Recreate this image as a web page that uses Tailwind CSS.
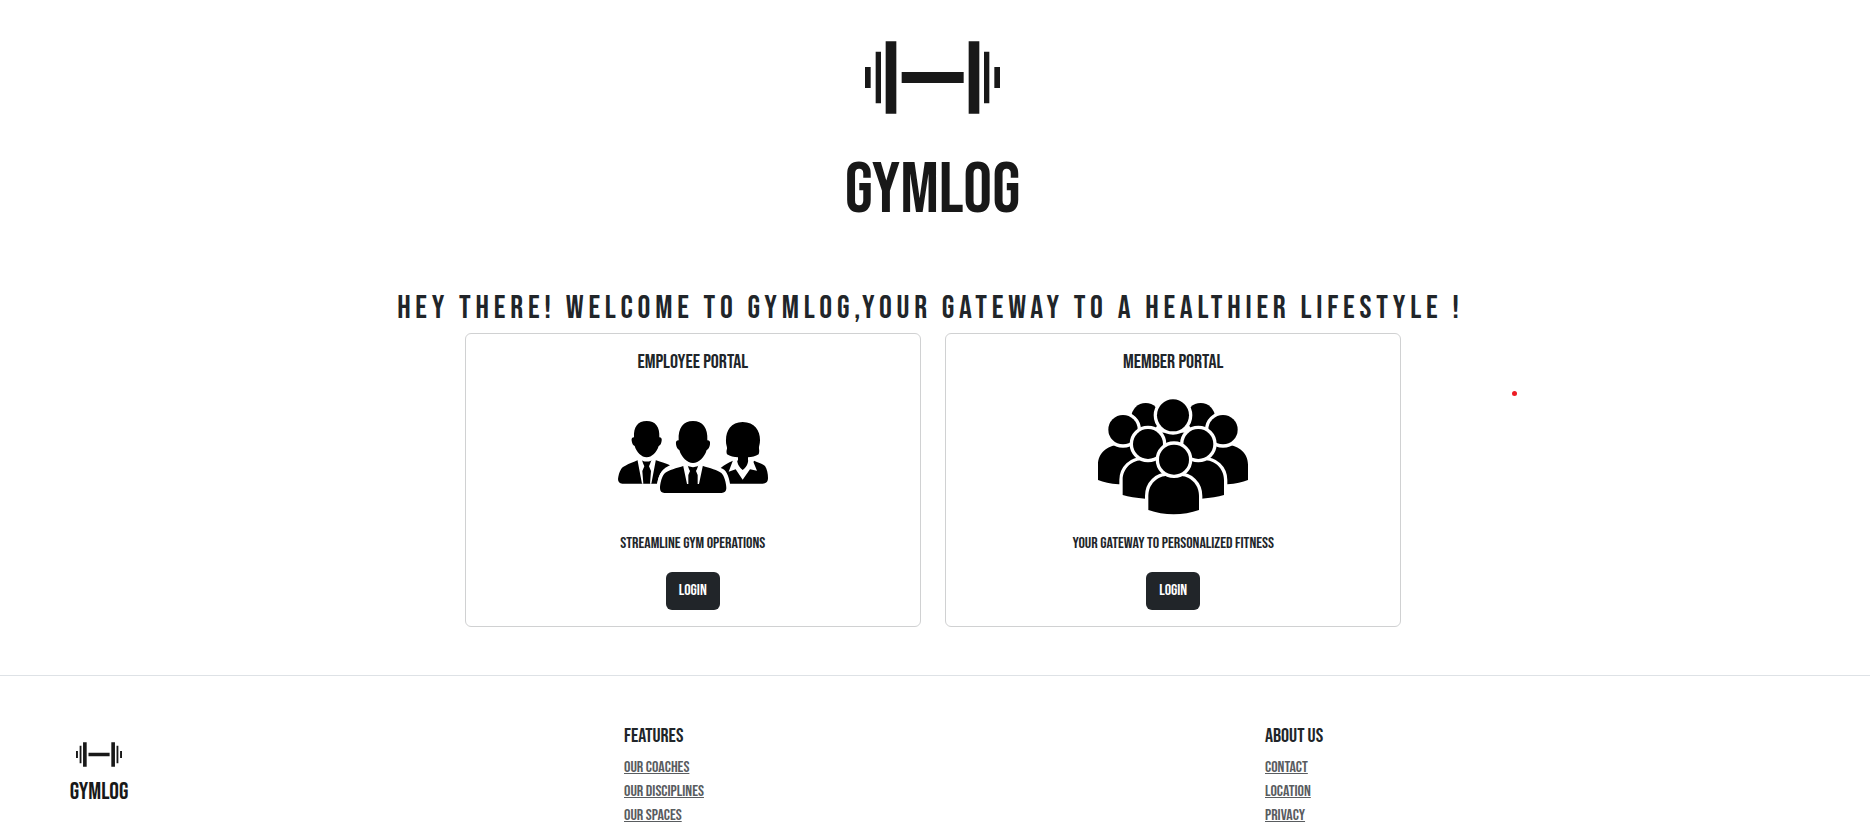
<!DOCTYPE html>
<html lang="en">
<head>
<meta charset="utf-8">
<meta name="viewport" content="width=device-width, initial-scale=1">
<title>GymLog</title>
<script src="https://cdn.jsdelivr.net/npm/@tailwindcss/browser@4"></script>
</head>
<body class="bg-white text-[#212529] font-['Bebas_Neue','Liberation_Sans_Narrow','Liberation_Sans',sans-serif] uppercase overflow-x-hidden">
<svg class="hidden">
  <symbol id="barbell" viewBox="105 63 405 219">
    <path fill="#181818" d="M105 141h17v63h-17zM137 95h16v155h-16zM167 64h32v217h-32zM215 156h186v33H215zM416 64h32v217h-32zM462 95h16v155h-16zM493 141h17v63h-17z"/>
  </symbol>
</svg>

<main class="relative flex flex-col items-center pt-[41px]">
  <svg class="w-[135px] h-[73px] mr-[5px]" aria-hidden="true"><use href="#barbell"/></svg>
  <div class="mt-[37px] mr-[5px] text-[72px] leading-[80px] text-[#181818]">GYMLOG</div>
  <h1 class="mt-[58px] mb-1 mr-[9px] text-[32px] leading-[40px] tracking-[0.15em] whitespace-nowrap">Hey there! Welcome to GymLog,your gateway to a healthier lifestyle !</h1>

  <div class="grid grid-cols-2 gap-6 w-[50.1%] min-w-[640px] mr-[4px]">
    <section class="flex flex-col items-center rounded-md border border-[#d0d1d2] p-4">
      <h2 class="text-[20px] leading-[24px]">Employee Portal</h2>
      <svg class="mt-2 size-[150px]" viewBox="51 -54 450 450" aria-hidden="true">
        <path d="M137 63c26 0 40 17 38 49 6 0 8 4 7 10-1 8-4 14-9 16-5 18-21 34-36 34s-31-16-36-34c-5-2-8-8-9-16-1-6 1-10 7-10-2-32 12-49 38-49z"/>
        <path d="M111 180l52 0c18 6 34 10 44 16-20 8-34 24-38 55H64c-9 0-13-6-13-14 3-22 10-36 22-40 12-7 25-11 38-17z"/>
        <path fill="#fff" d="M109 178l14 2c2 7 4 13 7 19l-6 14 3 38h-4zM165 178l-14 2c-2 7-4 13-7 19l6 14-3 38h4z"/>
        <path fill="#fff" d="M122 177h30l-2 5q-13 5-26 0z"/>
        <path d="M425 66c36 0 52 26 52 54 0 14-4 20-3 26 1 6 1 11-1 17-9 6-21 8-32 9v9l15 8 3-7c14 6 26 9 33 16 6 9 9 23 9 36 0 11-6 17-16 17h-98c-4-25-12-43-28-47 12-10 22-16 37-22l3 7 12-8v-9c-12-1-24-3-33-9-2-6-2-11 0-17 1-6-4-12-3-26 0-28 15-54 50-54z"/>
        <path fill="#fff" d="M396 181l12-6c0 18 8 28 17 35 10-7 17-17 17-35l13 6 13 31-21-4-22 31-21-31-21 7z"/>
        <path stroke="#fff" stroke-width="20" paint-order="stroke" d="M276 63c29 0 45 20 43 58 7 0 9 4 8 12-1 9-5 15-10 17-6 22-24 39-41 39s-35-17-41-39c-5-2-9-8-10-17-1-8 1-12 8-12-2-38 14-58 43-58zM249 197c-23 8-46 12-57 22-9 8-15 31-15 46 0 9 5 14 13 14h172c8 0 14-5 14-14 0-15-6-38-15-46-11-10-34-14-57-22z"/>
        <path fill="#fff" d="M246 195l14 0c2 8 4 13 7 18l-5 12 0 27h-4zM306 195l-14 0c-2 8-4 13-7 18l5 12 0 27h4z"/>
        <path fill="#fff" d="M258 190h36l-4 9q-14 5-28 0z"/>
      </svg>
      <p class="text-[16px] leading-[24px]">Streamline gym operations</p>
      <button type="button" class="mt-4 h-[38px] w-[54px] rounded-md bg-[#212529] text-[16px] leading-[24px] text-white">LOGIN</button>
    </section>

    <section class="flex flex-col items-center rounded-md border border-[#d0d1d2] p-4">
      <h2 class="text-[20px] leading-[24px]">Member Portal</h2>
      <svg class="mt-2 size-[150px]" viewBox="54 6 450 450" aria-hidden="true">
        <g stroke="#fff" stroke-width="20" paint-order="stroke">
          <circle cx="197" cy="112" r="43"/><circle cx="362" cy="112" r="43"/>
          <path d="M233 158h92v60h-92z"/>
          <circle cx="279" cy="106" r="48"/>
          <path d="M54 300v-46c0-34 28-58 60-58h54v117h-52c-26-2-45-6-62-13zM504 300v-46c0-34-28-58-60-58h-54v117h52c26-2 45-6 62-13z" stroke-width="0"/>
          <circle cx="129" cy="149" r="44"/><circle cx="429" cy="149" r="44"/>
          <path d="M128 345v-45c0-35 28-60 62-60h60v116h-54c-28-2-50-5-68-11zM432 345v-45c0-35-28-60-62-60h-60v116h54c28-2 50-5 68-11z"/>
          <circle cx="204" cy="192" r="45"/><circle cx="355" cy="192" r="45"/>
          <path d="M205 390v-42c0-36 27-61 60-61h32c33 0 60 25 60 61v42c-46 17-106 17-152 0z"/>
          <circle cx="282" cy="239" r="45"/>
        </g>
      </svg>
      <p class="text-[16px] leading-[24px]">Your gateway to personalized fitness</p>
      <button type="button" class="mt-4 h-[38px] w-[54px] rounded-md bg-[#212529] text-[16px] leading-[24px] text-white">LOGIN</button>
    </section>
  </div>
  <span class="absolute left-[80.85%] top-[391px] size-[5px] rounded-full bg-[#ed1c24]"></span>
</main>

<footer class="mt-12 grid grid-cols-[624fr_641fr_605fr] border-t border-[#dee2e6] pt-12">
  <div class="ml-[71px] mt-[18px] flex w-[56px] flex-col items-center">
    <svg class="w-[46px] h-[25px]" aria-hidden="true"><use href="#barbell"/></svg>
    <div class="mt-[13px] text-[24px] leading-[24px] text-[#181818]">GYMLOG</div>
  </div>
  <nav aria-labelledby="features">
    <h2 id="features" class="mb-2 text-[20px] leading-[24px]">Features</h2>
    <ul class="text-[16px] leading-[24px] text-[#595c5f] underline">
      <li><a href="#coaches">Our coaches</a></li>
      <li><a href="#disciplines">Our disciplines</a></li>
      <li><a href="#spaces">Our spaces</a></li>
    </ul>
  </nav>
  <nav aria-labelledby="about">
    <h2 id="about" class="mb-2 text-[20px] leading-[24px]">About us</h2>
    <ul class="text-[16px] leading-[24px] text-[#595c5f] underline">
      <li><a href="#contact">Contact</a></li>
      <li><a href="#location">Location</a></li>
      <li><a href="#privacy">Privacy</a></li>
    </ul>
  </nav>
</footer>
</body>
</html>
